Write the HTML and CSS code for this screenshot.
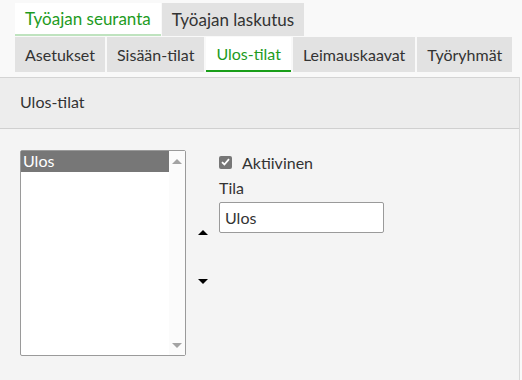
FILE: index.html
```html
<!DOCTYPE html>
<html>
<head>
  <meta charset="utf-8">
  <meta name="viewport" content="width=device-width, initial-scale=1">
  <title>Ulos-tilat</title>
  <link rel="stylesheet" href="styles.css">
</head>
<body>
  <div class="tabs top-tabs">
    <div class="tab active">Työajan seuranta</div>
    <div class="tab">Työajan laskutus</div>
  </div>
  <div class="tabs sub-tabs">
    <div class="tab">Asetukset</div>
    <div class="tab">Sisään-tilat</div>
    <div class="tab active">Ulos-tilat</div>
    <div class="tab">Leimauskaavat</div>
    <div class="tab">Työryhmät</div>
  </div>
  <div class="panel">
    <div class="panel-head">Ulos-tilat</div>
    <div class="panel-body">
      <div class="listbox">
        <div class="list-items">
          <div class="list-item selected">Ulos</div>
        </div>
        <div class="scrollbar">
          <span class="arrow-up small"></span>
          <span class="arrow-down small"></span>
        </div>
      </div>
      <div class="movers">
        <span class="arrow-up"></span>
        <span class="arrow-down"></span>
      </div>
      <div class="form">
        <label class="check-row">
          <span class="checkbox">
            <svg width="9" height="8" viewBox="0 0 9 8"><path d="M1 4.2 L3.4 6.5 L8 1.2" fill="none" stroke="#fff" stroke-width="1.8"/></svg>
          </span>
          Aktiivinen
        </label>
        <div class="field-label">Tila</div>
        <div class="text-input">Ulos</div>
      </div>
    </div>
  </div>
</body>
</html>
```

FILE: styles.css
```css
*{
  margin: 0;
  padding: 0;
  box-sizing: border-box;
}
body
{
  font-family: 'Lato', 'Liberation Sans', sans-serif;
  font-size: 16px;
  color: #333;
  background: #f9f9f9;
  padding-top: 3px;
  overflow: hidden;
}
.tabs
{
  display: flex;
  gap: 1px;
  padding-left: 15px;
  white-space: nowrap;
}
.tab
{
  background: #e2e2e2;
  padding: 0 10px;
  flex-shrink: 0;
}
.tab.active
{
  background: #fff;
  color: #1e9b1e;
}
.top-tabs .tab
{
  font-size: 17px;
  height: 33px;
  line-height: 33px;
}
.top-tabs .tab.active
{
  border-bottom: 2px solid #bfe3bf;
  line-height: 31px;
}
.sub-tabs
{
  margin-top: 1px;
  gap: 2px;
}
.sub-tabs .tab
{
  height: 35px;
  line-height: 35px;
}
.sub-tabs .tab.active
{
  border-bottom: 2px solid #1a9e1a;
  line-height: 33px;
}
.panel
{
  margin-top: 5px;
  width: 520px;
  border-top: 1px solid #d4d4d4;
  border-right: 1px solid #d8d8d8;
  background: #f4f4f4;
  height: 320px;
}
.panel-head
{
  background: #ededed;
  border-bottom: 1px solid #d0d0d0;
  height: 51px;
  line-height: 48px;
  padding-left: 20px;
}
.panel-body
{
  display: flex;
  padding: 21px 0 0 20px;
}
.listbox
{
  width: 166px;
  height: 206px;
  border: 1px solid #9a9a9a;
  border-radius: 2px;
  background: #fff;
  display: flex;
}
.list-items
{
  flex: 1;
}
.list-item
{
  height: 21px;
  line-height: 20px;
  padding-left: 2px;
}
.list-item.selected
{
  background: #777;
  color: #fff;
}
.scrollbar
{
  width: 16px;
  background: #fbfbfb;
  display: flex;
  flex-direction: column;
  justify-content: space-between;
  align-items: center;
  padding: 8px 0 7px;
}
.arrow-up, .arrow-down
{
  width: 0;
  height: 0;
  border-left: 5px solid transparent;
  border-right: 5px solid transparent;
}
.arrow-up
{
  border-bottom: 5px solid #000;
}
.arrow-down
{
  border-top: 5px solid #000;
}
.arrow-up.small
{
  border-bottom-color: #a3a3a3;
}
.arrow-down.small
{
  border-top-color: #a3a3a3;
}
.movers
{
  width: 33px;
  display: flex;
  flex-direction: column;
  align-items: center;
  gap: 44px;
  padding-top: 80px;
}
.form
{
  padding-top: 4px;
}
.check-row
{
  display: flex;
  align-items: center;
  gap: 10px;
  height: 16px;
}
.checkbox
{
  width: 13px;
  height: 13px;
  border-radius: 2px;
  background: #777;
  display: flex;
  align-items: center;
  justify-content: center;
}
.field-label
{
  margin-top: 8px;
  line-height: 20px;
}
.text-input
{
  margin-top: 4px;
  width: 165px;
  height: 31px;
  border: 1px solid #9a9a9a;
  border-radius: 2px;
  background: #fff;
  line-height: 29px;
  padding-left: 5px;
}
```
